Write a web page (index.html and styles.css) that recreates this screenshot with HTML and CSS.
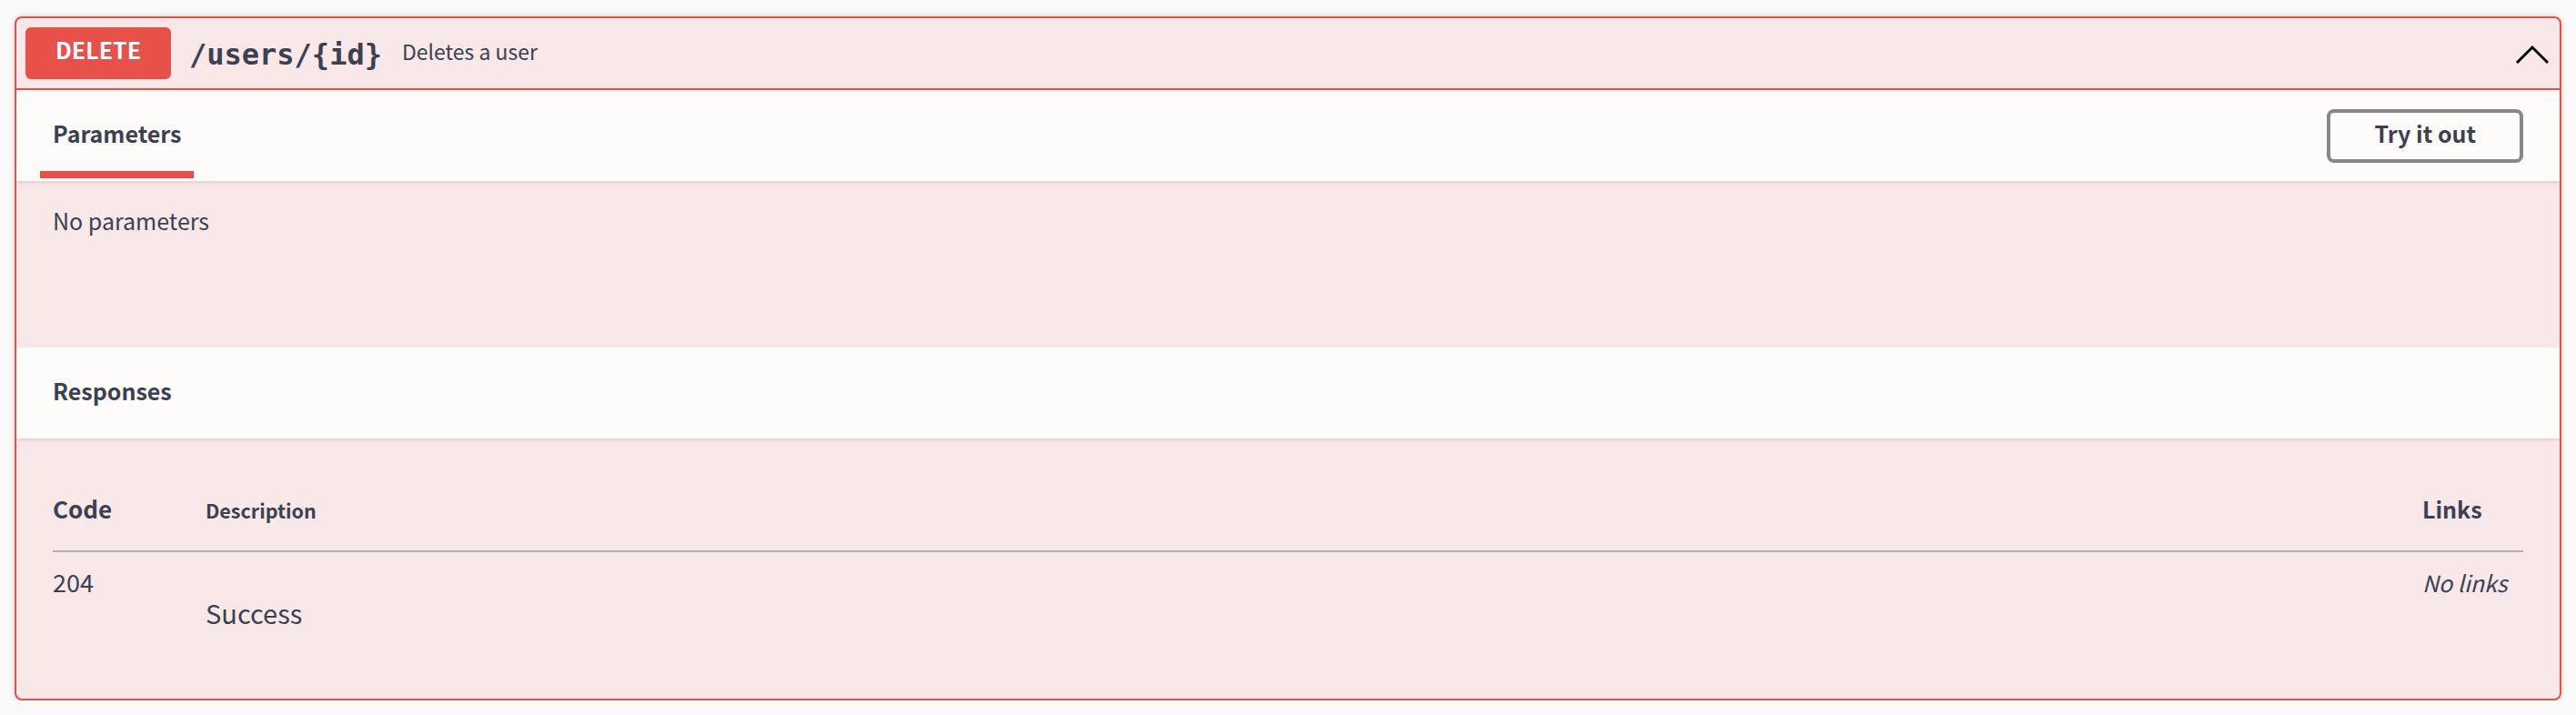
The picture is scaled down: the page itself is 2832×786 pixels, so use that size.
FILE: index.html
```html
<!DOCTYPE html>
<html>
<head>
    <title>DELETE /users/{id}</title>
    <link rel="stylesheet" href="styles.css">
</head>
<body>
    <div class="opblock opblock-delete">
        <!-- summary bar -->
        <div class="opblock-summary">
            <span class="opblock-summary-method">DELETE</span>
            <span class="opblock-summary-path">/users/{id}</span>
            <span class="opblock-summary-description">Deletes a user</span>
            <svg class="arrow" width="40" height="40" viewBox="0 0 40 40">
                <polyline points="3,30 20,13 37,30" fill="none" stroke="#000" stroke-width="3"/>
            </svg>
        </div>

        <!-- parameters -->
        <div class="opblock-section-header">
            <div class="tab-item">
                <h4>Parameters</h4>
            </div>
            <button class="try-out-btn">Try it out</button>
        </div>
        <div class="opblock-description-wrapper">
            <p>No parameters</p>
        </div>

        <!-- responses -->
        <div class="opblock-section-header responses-header">
            <h4>Responses</h4>
        </div>
        <div class="responses-inner">
            <div class="resp-row resp-head">
                <div class="col-status">Code</div>
                <div class="col-description">Description</div>
                <div class="col-links">Links</div>
            </div>
            <div class="resp-row resp-body">
                <div class="col-status">204</div>
                <div class="col-description">
                    <p class="markdown">Success</p>
                </div>
                <div class="col-links"><i>No links</i></div>
            </div>
        </div>
    </div>
</body>
</html>
```

FILE: styles.css
```css
body {
    margin: 0;
    padding: 18px 16px 0;
    background-color: #fafafa;
    font-family: "Noto Sans CJK KR", "Noto Sans", sans-serif;
    color: #3b4151;
}

h4, p {
    margin: 0;
}

/* operation block */
.opblock {
    border: 2px solid #e8504a;
    border-radius: 8px;
    background-color: #f8e8e8;
    box-shadow: 0 0 6px rgba(0, 0, 0, 0.19);
    overflow: hidden;
}

.opblock-summary {
    display: flex;
    align-items: center;
    padding: 10px;
    border-bottom: 2px solid #e8504a;
}

.opblock-summary-method {
    width: 160px;
    height: 57px;
    box-sizing: border-box;
    padding-bottom: 8px;
    line-height: 49px;
    text-align: center;
    font-size: 25px;
    font-weight: 700;
    color: #fff;
    background-color: #e8504a;
    border-radius: 6px;
}

.opblock-summary-path {
    padding: 3px 22px 0 20px;
    font-family: "DejaVu Sans Mono", monospace;
    font-size: 32px;
    font-weight: 700;
    line-height: 40px;
}

.opblock-summary-description {
    flex: 1;
    padding-bottom: 5px;
    font-size: 23px;
    line-height: 36px;
}

.arrow {
    display: block;
}

/* section headers */
.opblock-section-header {
    display: flex;
    align-items: center;
    justify-content: space-between;
    height: 100px;
    padding: 0 40px;
    background-color: rgba(255, 255, 255, 0.8);
    box-shadow: 0 2px 4px rgba(0, 0, 0, 0.1);
}

.opblock-section-header h4 {
    font-size: 25px;
    font-weight: 700;
    line-height: 36px;
}

.tab-item {
    display: flex;
    flex-direction: column;
    align-items: center;
    align-self: stretch;
    padding-top: 29px;
}

.tab-item::after {
    content: "";
    width: 120%;
    height: 8px;
    margin-top: 24px;
    background-color: #e8504a;
    flex-shrink: 0;
}

.try-out-btn {
    padding: 0 48px 6px;
    border: 4px solid #888;
    border-radius: 8px;
    background: transparent;
    font-family: inherit;
    font-size: 25px;
    font-weight: 700;
    line-height: 45px;
    color: #3b4151;
}

.opblock-description-wrapper {
    padding: 25px 40px;
    min-height: 133px;
}

.opblock-description-wrapper p {
    font-size: 25px;
    line-height: 36px;
}

.responses-header {
    padding-bottom: 6px;
    height: 94px;
}

/* responses table */
.responses-inner {
    padding: 59px 40px 75px;
}

.resp-row {
    display: grid;
    grid-template-columns: 168px 1fr 111px;
}

.resp-head {
    align-items: baseline;
    padding-bottom: 26px;
    border-bottom: 2px solid #b5aeb4;
    font-weight: 700;
    line-height: 36px;
}

.resp-head .col-status {
    font-size: 26px;
}

.resp-head .col-description {
    font-size: 21.5px;
}

.resp-head .col-links {
    font-size: 25px;
}

.resp-body {
    align-items: start;
    padding-top: 15px;
    font-size: 25px;
    line-height: 36px;
}

.resp-body .col-status {
    font-size: 27px;
}

.markdown {
    margin-top: 31px;
    font-size: 29px;
    line-height: 40px;
}
```
